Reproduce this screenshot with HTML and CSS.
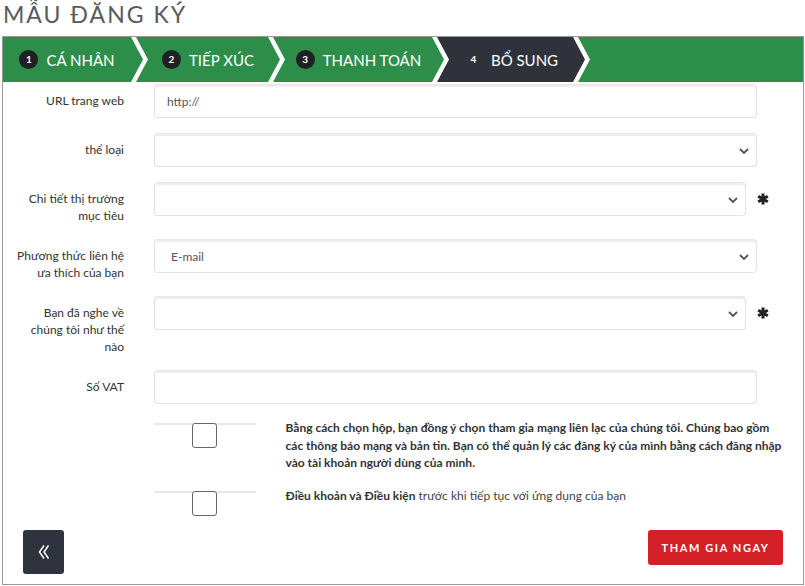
FILE: index.html
```html
<!DOCTYPE html>
<html lang="vi">
  <head>
    <meta charset="UTF-8" />
    <meta name="viewport" content="width=device-width, initial-scale=1.0" />
    <title>Mẫu đăng ký</title>
    <link rel="stylesheet" href="styles.css">
  </head>
  <body>
    <div class="page">
      <h1 class="title">MẪU ĐĂNG KÝ</h1>

      <div class="wizard">
        <div class="steps">
          <div class="step step-first"><span class="num">1</span><span class="step-name">CÁ NHÂN</span></div>
          <div class="step step-2"><span class="num">2</span><span class="step-name">TIẾP XÚC</span></div>
          <div class="step step-3"><span class="num">3</span><span class="step-name">THANH TOÁN</span></div>
          <div class="step step-4 active"><span class="num">4</span><span class="step-name">BỔ SUNG</span></div>
          <div class="step-rest"></div>
        </div>

        <form class="form">
          <div class="row">
            <label class="lbl">URL trang web</label>
            <div class="field"><input class="ctl" type="text" value="http://" /></div>
          </div>
          <div class="row">
            <label class="lbl">thể loại</label>
            <div class="field">
              <div class="select">
                <select class="ctl"><option></option></select>
                <svg class="caret" width="10" height="6" viewBox="0 0 10 6"><path d="M1 1l4 4 4-4" fill="none" stroke="#555" stroke-width="1.8"/></svg>
              </div>
            </div>
          </div>
          <div class="row">
            <label class="lbl">Chi tiết thị trường<br>mục tiêu</label>
            <div class="field req">
              <div class="select">
                <select class="ctl"><option></option></select>
                <svg class="caret" width="10" height="6" viewBox="0 0 10 6"><path d="M1 1l4 4 4-4" fill="none" stroke="#555" stroke-width="1.8"/></svg>
              </div>
              <span class="star"><svg width="12" height="12" viewBox="0 0 12 12"><path d="M6 0.5v11M1.2 3.2l9.6 5.6M1.2 8.8l9.6-5.6" stroke="#222" stroke-width="3"/></svg></span>
            </div>
          </div>
          <div class="row">
            <label class="lbl">Phương thức liên hệ<br>ưa thích của bạn</label>
            <div class="field">
              <div class="select">
                <select class="ctl pick"><option>E-mail</option></select>
                <svg class="caret" width="10" height="6" viewBox="0 0 10 6"><path d="M1 1l4 4 4-4" fill="none" stroke="#555" stroke-width="1.8"/></svg>
              </div>
            </div>
          </div>
          <div class="row">
            <label class="lbl">Bạn đã nghe về<br>chúng tôi như thế<br>nào</label>
            <div class="field req">
              <div class="select">
                <select class="ctl"><option></option></select>
                <svg class="caret" width="10" height="6" viewBox="0 0 10 6"><path d="M1 1l4 4 4-4" fill="none" stroke="#555" stroke-width="1.8"/></svg>
              </div>
              <span class="star"><svg width="12" height="12" viewBox="0 0 12 12"><path d="M6 0.5v11M1.2 3.2l9.6 5.6M1.2 8.8l9.6-5.6" stroke="#222" stroke-width="3"/></svg></span>
            </div>
          </div>
          <div class="row">
            <label class="lbl">Số VAT</label>
            <div class="field"><input class="ctl" type="text" /></div>
          </div>

          <div class="check-row">
            <div class="check-cell"><span class="box"></span></div>
            <div class="check-text">Bằng cách chọn hộp, bạn đồng ý chọn tham gia mạng liên lạc của chúng tôi. Chúng bao gồm<br>các thông báo mạng và bản tin. Bạn có thể quản lý các đăng ký của mình bằng cách đăng nhập<br>vào tài khoản người dùng của mình.</div>
          </div>
          <div class="check-row last">
            <div class="check-cell"><span class="box"></span></div>
            <div class="check-text plain"><b>Điều khoản và Điều kiện</b> trước khi tiếp tục với ứng dụng của bạn</div>
          </div>

          <div class="actions">
            <button type="button" class="back">
              <svg width="14" height="16" viewBox="0 0 14 16"><path d="M7 1.5L2.5 8l4.5 6.5M11.5 1.5L7 8l4.5 6.5" fill="none" stroke="#fff" stroke-width="1.5"/></svg>
            </button>
            <button type="button" class="join">THAM GIA NGAY</button>
          </div>
        </form>
      </div>
    </div>
  </body>
</html>
```

FILE: styles.css
```css
body {
  margin: 0;
  background-color: #fff;
  font-family: Lato, "Open Sans", sans-serif;
}
.page {
  padding: 0 1px 0 2px;
}
.title {
  margin: 0 0 8px 1px;
  height: 28px;
  line-height: 28px;
  font-size: 23px;
  font-weight: normal;
  letter-spacing: 2px;
  color: #5a5a5a;
}
.wizard {
  border: 1px solid #999;
  background-color: #fff;
}
.steps {
  display: flex;
  height: 45px;
  background-color: #fff;
}
.step {
  display: flex;
  align-items: center;
  justify-content: center;
  gap: 8px;
  box-sizing: border-box;
  padding: 0 12px;
  margin-left: -7px;
  background-color: #2d8e4a;
  color: #fff;
  clip-path: polygon(0 0, calc(100% - 12px) 0, 100% 50%, calc(100% - 12px) 100%, 0 100%, 12px 50%);
}
.step-first {
  width: 140px;
  margin-left: 0;
  padding-left: 0;
  clip-path: polygon(0 0, calc(100% - 12px) 0, 100% 50%, calc(100% - 12px) 100%, 0 100%);
}
.step-2 {
  width: 144px;
}
.step-3 {
  width: 171px;
}
.step-4 {
  width: 148px;
}
.step.active {
  background-color: #2f323b;
}
.step-rest {
  flex: 1;
  margin-left: -7px;
  background-color: #2d8e4a;
  clip-path: polygon(0 0, 100% 0, 100% 100%, 0 100%, 12px 50%);
}
.num {
  width: 19px;
  height: 19px;
  border-radius: 50%;
  background-color: #1f2024;
  font-size: 10px;
  font-weight: bold;
  line-height: 19px;
  text-align: center;
}
.active .num {
  background-color: #2f323b;
}
.step-name {
  font-size: 15px;
  white-space: nowrap;
}
.form {
  padding-top: 2px;
}
.row {
  display: flex;
  align-items: flex-start;
  margin-bottom: 15px;
}
.lbl {
  width: 114px;
  margin-left: 7px;
  margin-right: 30px;
  padding-top: 8px;
  text-align: right;
  font-size: 12px;
  line-height: 17px;
  color: #333;
}
.field {
  width: 603px;
  display: flex;
  align-items: center;
}
.field.req {
  width: 626px;
}
.select {
  position: relative;
  flex: 1;
}
.ctl {
  display: block;
  width: 100%;
  height: 34px;
  box-sizing: border-box;
  padding: 0 12px;
  border: 1px solid #e2e2e2;
  border-top-color: #e6e6e6;
  border-radius: 4px;
  box-shadow: inset 0 2px 1px #eeeeee;
  background-color: #fff;
  font-family: Lato, "Open Sans", sans-serif;
  font-size: 12px;
  color: #555;
  outline: none;
}
select.ctl {
  appearance: none;
  -webkit-appearance: none;
  padding-left: 16px;
}
.caret {
  position: absolute;
  right: 8px;
  top: 15px;
}
.star {
  width: 34px;
  display: flex;
  justify-content: center;
}
.check-row {
  display: flex;
  align-items: flex-start;
  margin-left: 151px;
  margin-bottom: 15px;
}
.check-row.last {
  margin-bottom: 14px;
}
.check-cell {
  width: 102px;
  margin-top: 4px;
  border-top: 2px solid #e8e8e8;
  display: flex;
  justify-content: center;
}
.box {
  width: 25px;
  height: 25px;
  margin-top: -2px;
  box-sizing: border-box;
  border: 1px solid #666;
  border-radius: 3px;
  background-color: #fff;
}
.check-text {
  width: 520px;
  margin-left: 30px;
  font-size: 12px;
  line-height: 17.5px;
  font-weight: bold;
  color: #333;
}
.check-text.plain {
  font-weight: normal;
  color: #444;
}
.check-text.plain b {
  color: #333;
}
.actions {
  display: flex;
  justify-content: space-between;
  align-items: flex-start;
  padding: 0 20px 10px 20px;
}
button {
  border: none;
  cursor: pointer;
  font-family: Lato, "Open Sans", sans-serif;
}
.back {
  width: 41px;
  height: 44px;
  border-radius: 3px;
  background-color: #2e333d;
  display: flex;
  align-items: center;
  justify-content: center;
  padding: 0;
}
.join {
  width: 135px;
  height: 35px;
  border-radius: 3px;
  background-color: #d42026;
  color: #fff;
  font-size: 11px;
  font-weight: bold;
  letter-spacing: 1.6px;
  padding: 0;
}
```
